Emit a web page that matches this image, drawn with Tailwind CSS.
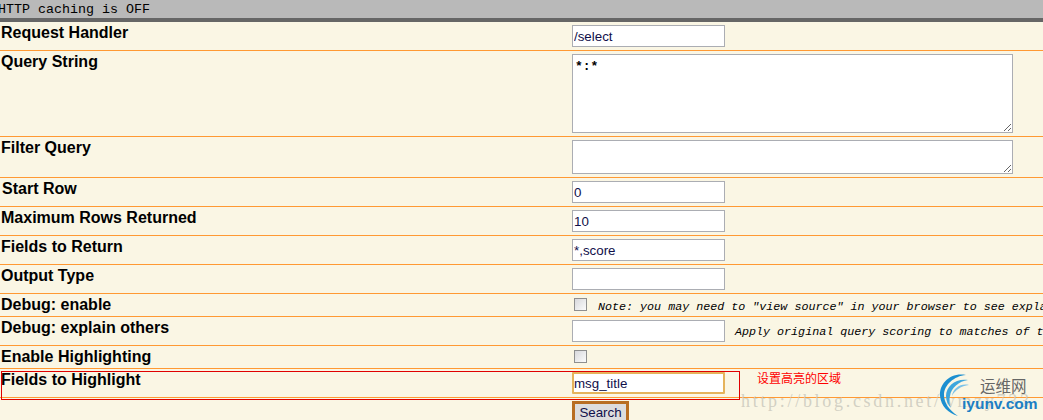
<!DOCTYPE html>
<html lang="en">

<head>
    <meta charset="UTF-8">
    <title>Solr Query</title>
    <script src="https://cdn.jsdelivr.net/npm/@tailwindcss/browser@4"></script>
</head>

<body class="relative h-[420px] w-[1043px] overflow-hidden bg-[#faf6e4] font-['Liberation_Sans',sans-serif] text-black">
    <div class="h-[22px] overflow-hidden border-b-4 border-[#666666] bg-[#b9b9b9] font-['Liberation_Mono',monospace] text-[13.33px] leading-[19px] whitespace-nowrap">
        <span class="-ml-[2px] block">HTTP caching is OFF</span>
    </div>

    <div class="grid h-[29px] grid-cols-[572px_1fr] border-b border-[#ff9933]">
        <div class="pt-[1px] pl-[1px] text-[16px] leading-[20px] font-bold">Request Handler</div>
        <div class="pt-[3px]"><input value="/select" class="block h-[22px] w-[153px] border border-[#abadb3] bg-white px-[1px] text-[13.33px] text-[#10104a]"></div>
    </div>
    <div class="grid h-[86px] grid-cols-[572px_1fr] border-b border-[#ff9933]">
        <div class="pt-[1px] pl-[1px] text-[16px] leading-[20px] font-bold">Query String</div>
        <div class="pt-[3px]"><textarea class="block h-[79px] w-[441px] border border-[#abadb3] bg-white px-[2px] py-[2px] font-['Liberation_Mono',monospace] text-[13px] font-bold">*:*</textarea></div>
    </div>
    <div class="grid h-[41px] grid-cols-[572px_1fr] border-b border-[#ff9933]">
        <div class="pt-[1px] pl-[1px] text-[16px] leading-[20px] font-bold">Filter Query</div>
        <div class="pt-[3px]"><textarea class="block h-[34px] w-[441px] border border-[#abadb3] bg-white"></textarea></div>
    </div>
    <div class="grid h-[29px] grid-cols-[572px_1fr] border-b border-[#ff9933]">
        <div class="pt-[1px] pl-[2px] text-[16px] leading-[20px] font-bold">Start Row</div>
        <div class="pt-[3px]"><input value="0" class="block h-[22px] w-[153px] border border-[#abadb3] bg-white px-[1px] text-[13.33px] text-[#10104a]"></div>
    </div>
    <div class="grid h-[29px] grid-cols-[572px_1fr] border-b border-[#ff9933]">
        <div class="pt-[1px] pl-[1px] text-[16px] leading-[20px] font-bold">Maximum Rows Returned</div>
        <div class="pt-[3px]"><input value="10" class="block h-[22px] w-[153px] border border-[#abadb3] bg-white px-[1px] text-[13.33px] text-[#10104a]"></div>
    </div>
    <div class="grid h-[29px] grid-cols-[572px_1fr] border-b border-[#ff9933]">
        <div class="pt-[1px] pl-[1px] text-[16px] leading-[20px] font-bold">Fields to Return</div>
        <div class="pt-[3px]"><input value="*,score" class="block h-[22px] w-[153px] border border-[#abadb3] bg-white px-[1px] text-[13.33px] text-[#10104a]"></div>
    </div>
    <div class="grid h-[29px] grid-cols-[572px_1fr] border-b border-[#ff9933]">
        <div class="pt-[1px] pl-[1px] text-[16px] leading-[20px] font-bold">Output Type</div>
        <div class="pt-[3px]"><input class="block h-[22px] w-[153px] border border-[#abadb3] bg-white"></div>
    </div>
    <div class="grid h-[23px] grid-cols-[572px_1fr] border-b border-[#ff9933]">
        <div class="pt-[1px] pl-[1px] text-[16px] leading-[20px] font-bold">Debug: enable</div>
        <div class="flex items-start whitespace-nowrap">
            <span class="mt-[4px] ml-[2px] block h-[13px] w-[13px] border border-[#8e8f8f] bg-gradient-to-br from-[#d8d9dd] to-[#fbfbfb]"></span>
            <span class="ml-[11px] pt-[3px] font-['Liberation_Mono',monospace] text-[11.7px] leading-[20px] italic">Note: you may need to "view source" in your browser to see explain</span>
        </div>
    </div>
    <div class="grid h-[29px] grid-cols-[572px_1fr] border-b border-[#ff9933]">
        <div class="pt-[1px] pl-[1px] text-[16px] leading-[20px] font-bold">Debug: explain others</div>
        <div class="flex items-start whitespace-nowrap pt-[3px]">
            <input class="block h-[22px] w-[153px] border border-[#abadb3] bg-white">
            <span class="ml-[10px] pt-[1px] font-['Liberation_Mono',monospace] text-[11.7px] leading-[22px] italic">Apply original query scoring to matches of the</span>
        </div>
    </div>
    <div class="grid h-[23px] grid-cols-[572px_1fr] border-b border-[#ff9933]">
        <div class="pt-[1px] pl-[1px] text-[16px] leading-[20px] font-bold">Enable Highlighting</div>
        <div><span class="mt-[4px] ml-[2px] block h-[13px] w-[13px] border border-[#8e8f8f] bg-gradient-to-br from-[#d8d9dd] to-[#fbfbfb]"></span></div>
    </div>
    <div class="grid h-[29px] grid-cols-[572px_1fr] border-b border-[#ff9933]">
        <div class="pt-[1px] pl-[1px] text-[16px] leading-[20px] font-bold">Fields to Highlight</div>
        <div class="pt-[3px]"><input value="msg_title" class="block h-[22px] w-[153px] rounded-[1px] border-2 border-[#e5b35c] bg-white px-0 text-[13.33px] text-[#10104a]"></div>
    </div>
    <div class="pt-[3px] pl-[572px]">
        <button class="block h-[24px] w-[57px] border-[3px] border-[#b86e22] bg-[#dddddd] text-[13.33px] leading-[18px] text-[#10104a]">Search</button>
    </div>

    <!-- annotation drawn over the screenshot -->
    <div class="absolute top-[371px] left-[1px] h-[29px] w-[739px] border border-[#e00000]"></div>
    <span class="absolute top-[370px] left-[757px] font-['Noto_Sans_CJK_SC',sans-serif] text-[12px] leading-[16px] text-[#ff0000]">设置高亮的区域</span>

    <!-- watermarks -->
    <span class="absolute top-[391px] left-[741px] font-['Liberation_Serif',serif] text-[18px] leading-[20px] tracking-[2.7px] whitespace-nowrap text-[#c8c6bb]/80">http://blog.csdn.net/wmzy733</span>
    <svg class="absolute top-[372px] left-[936px]" width="50" height="46" viewBox="0 0 50 46" fill="none">
        <path d="M30 3C14 0 3 12 4 24c1 10 8 17 18 20C13 38 8 31 8 23 8 13 18 4 30 3Z" fill="#1c8fd0"/>
        <path d="M32 8C20 6 10 14 10 24c0 5 2 9 5 12C13 32 13 28 14 24 15 16 23 9 32 8Z" fill="#3da6dd"/>
        <path d="M33 13C25 11 17 16 16 24 19 18 25 14 33 13Z" fill="#7cc2e8"/>
    </svg>
    <span class="absolute top-[375px] left-[980px] font-['Noto_Sans_CJK_SC',sans-serif] text-[15.5px] leading-[20px] text-[#666666]">运维网</span>
    <span class="absolute top-[395px] left-[962px] text-[15.5px] leading-[18px] font-bold text-[#1c7fc4]">iyunv.com</span>
</body>

</html>
